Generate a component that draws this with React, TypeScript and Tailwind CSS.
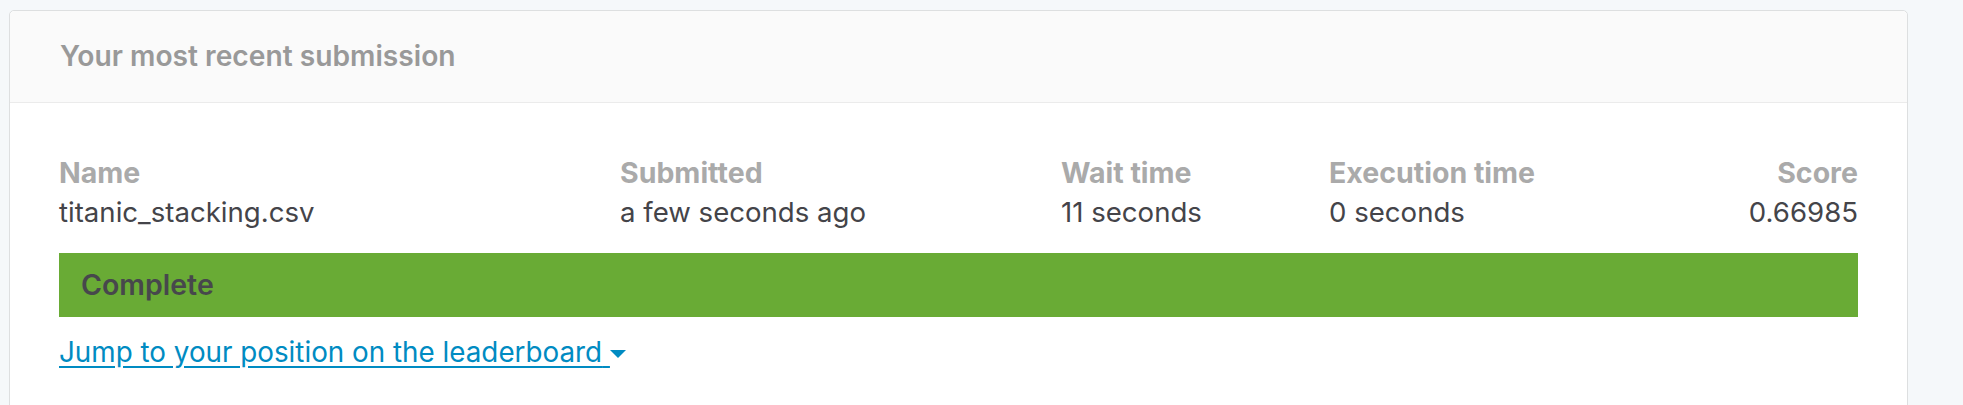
import React from 'react';

const font = { fontFamily: 'Inter, "Liberation Sans", sans-serif' };

const columns = [
  { label: 'Name', value: 'titanic_stacking.csv', right: false },
  { label: 'Submitted', value: 'a few seconds ago', right: false },
  { label: 'Wait time', value: '11 seconds', right: false },
  { label: 'Execution time', value: '0 seconds', right: false },
  { label: 'Score', value: '0.66985', right: true },
];

export default function App() {
  return (
    <div
      className="h-[405px] overflow-hidden bg-[#f5f8fa] pl-[9px] pt-[10px]"
      style={font}
    >
      <div className="w-[1899px] rounded-t-[5px] border border-[#dddfe0] bg-white">
        <div className="flex h-[92px] items-center rounded-t-[5px] border-b border-[#ebebeb] bg-[#fafafa] px-[50px]">
          <h2 className="text-[28.2px] font-semibold text-[#999999]">Your most recent submission</h2>
        </div>

        <div className="px-[49px] pb-[60px] pt-[50px]">
          <div className="grid grid-cols-[561px_441px_268px_1fr_auto] leading-[39px]">
            {columns.map((c) => (
              <div key={c.label} className={c.right ? 'text-right' : ''}>
                <div className="text-[28.5px] font-bold text-[#aaaaaa]">{c.label}</div>
                <div className="pt-[1px] text-[27.6px] text-[#444449]">{c.value}</div>
              </div>
            ))}
          </div>

          <div className="mt-[21px] flex h-[64px] items-center bg-[#69ab35] px-[22px]">
            <span className="text-[28.5px] font-semibold text-[#47474c]">Complete</span>
          </div>

          <div className="mt-[16px] leading-[39px]">
            <a href="#" className="text-[27.8px] text-[#008bc2] underline underline-offset-[4px]">
              Jump to your position on the leaderboard{' '}
              <svg
                className="inline-block align-middle"
                width="16"
                height="8"
                viewBox="0 0 16 8"
              >
                <path d="M0 0 H16 L8 8 Z" fill="#008bc2" />
              </svg>
            </a>
          </div>
        </div>
      </div>
    </div>
  );
}
